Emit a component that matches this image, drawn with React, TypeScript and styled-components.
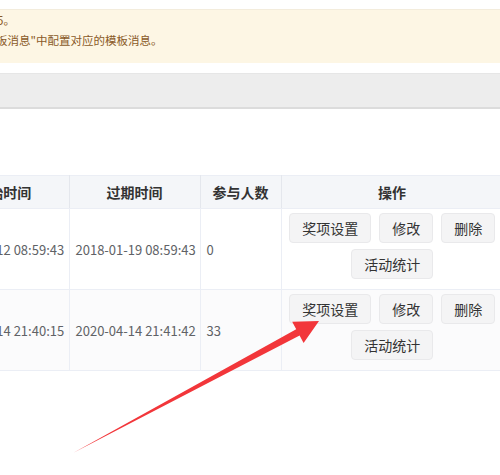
import React from "react";
import styled, { createGlobalStyle } from "styled-components";

const Global = createGlobalStyle`
  html, body { margin: 0; padding: 0; background: #ffffff; }
  body {
    width: 500px;
    height: 475px;
    overflow: hidden;
    font-family: "Noto Sans CJK SC", "Noto Sans", sans-serif;
  }
`;

const Page = styled.div`
  position: relative;
  width: 500px;
  height: 475px;
  overflow: hidden;
  padding-top: 9px;
  box-sizing: border-box;
`;

const Alert = styled.div`
  background: #fdf6e4;
  border-top: 1px solid #f3ecdc;
  padding: 0 0 13px 0;
  color: #8a5a28;
  font-size: 11.5px;
`;

const AlertLine = styled.div`
  line-height: 20px;
  height: 20px;
  white-space: nowrap;
  margin-left: -4px;
`;

const ToolBar = styled.div`
  margin-top: 10px;
  height: 33px;
  background: #ededed;
  border-top: 1px solid #e6e6e6;
  border-bottom: 2px solid #dcdcdc;
`;

const TableWrap = styled.div`
  margin-top: 66px;
  margin-left: -62px;
  width: 565px;
`;

const Table = styled.table`
  width: 565px;
  border-collapse: collapse;
  table-layout: fixed;
`;

const Th = styled.th`
  height: 32px;
  padding: 0;
  background: #f4f6f9;
  border-top: 1px solid #ebeef5;
  border-bottom: 1px solid #ebeef5;
  border-right: 1px solid #e4e7ed;
  color: #333333;
  font-size: 14px;
  font-weight: 600;
  text-align: center;
`;

const Tr = styled.tr<{ $striped?: boolean }>`
  background: ${(p) => (p.$striped ? "#fbfbfc" : "#ffffff")};
`;

const Td = styled.td`
  padding: 4px 6px;
  border-bottom: 1px solid #ebeef5;
  border-right: 1px solid #ebeef5;
  color: #606266;
  font-size: 13px;
  vertical-align: middle;
  white-space: nowrap;
  height: 72px;
`;

const ActionCell = styled.td`
  padding: 4px 0 4px 0;
  border-bottom: 1px solid #ebeef5;
  vertical-align: middle;
`;

const Actions = styled.div`
  display: flex;
  flex-wrap: wrap;
  justify-content: center;
`;

const Btn = styled.button`
  height: 30px;
  margin: 0 4px 6px;
  padding: 0 12px;
  background: #f4f4f5;
  border: 1px solid #e9e9eb;
  border-radius: 4px;
  color: #333333;
  font-family: "Noto Sans CJK SC", sans-serif;
  font-size: 14px;
  line-height: 28px;
  cursor: pointer;
`;

const ArrowSvg = styled.svg`
  position: absolute;
  left: 0;
  top: 0;
  pointer-events: none;
`;

const rows = [
  { start: "2018-01-12 08:59:43", end: "2018-01-19 08:59:43", count: "0" },
  { start: "2020-04-14 21:40:15", end: "2020-04-14 21:41:42", count: "33" },
];

export default function App() {
  return (
    <>
      <Global />
      <Page>
        <Alert>
          <AlertLine style={{ marginLeft: -3 }}>5。</AlertLine>
          <AlertLine>板消息"中配置对应的模板消息。</AlertLine>
        </Alert>
        <ToolBar />
        <TableWrap>
          <Table>
            <colgroup>
              <col style={{ width: 131 }} />
              <col style={{ width: 131 }} />
              <col style={{ width: 81 }} />
              <col style={{ width: 222 }} />
            </colgroup>
            <thead>
              <tr>
                <Th>开始时间</Th>
                <Th>过期时间</Th>
                <Th>参与人数</Th>
                <Th>操作</Th>
              </tr>
            </thead>
            <tbody>
              {rows.map((r, i) => (
                <Tr key={i} $striped={i % 2 === 1}>
                  <Td>{r.start}</Td>
                  <Td>{r.end}</Td>
                  <Td>{r.count}</Td>
                  <ActionCell>
                    <Actions>
                      <Btn>奖项设置</Btn>
                      <Btn>修改</Btn>
                      <Btn>删除</Btn>
                      <Btn>活动统计</Btn>
                    </Actions>
                  </ActionCell>
                </Tr>
              ))}
            </tbody>
          </Table>
        </TableWrap>
        <ArrowSvg width="500" height="475" viewBox="0 0 500 475">
          <polygon
            points="73,453 296.2,329.3 292.2,321.8 319,321 303.6,343 299.6,335.5"
            fill="#f2363a"
          />
        </ArrowSvg>
      </Page>
    </>
  );
}
